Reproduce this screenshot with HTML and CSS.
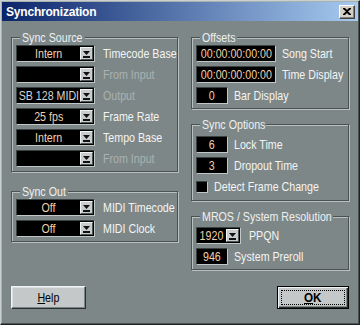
FILE: index.html
```html
<!DOCTYPE html>
<html lang="en">
<head>
    <meta charset="UTF-8">
    <title>Synchronization</title>
    <link rel="stylesheet" href="styles.css">
</head>
<body>
    <div class="window">
        <div class="titlebar">
            <span class="title">Synchronization</span>
            <span class="close">
                <svg width="8" height="7" viewBox="0 0 8 7"><path d="M0 0h2l2 2 2-2h2v1L5 3.5 8 6v1H6L4 5 2 7H0V6l3-2.5L0 1z" fill="#000"/></svg>
            </span>
        </div>
        <div class="content">
            <div class="columns">
                <div class="col left">
                    <fieldset class="group source">
                        <legend><span>Sync Source</span></legend>
                        <div class="row">
                            <div class="combo"><span class="value"><span>Intern</span></span><span class="drop"><svg width="7" height="8" viewBox="0 0 7 8"><path d="M0 1h7L3.5 5z" fill="#111"/><rect x="0" y="6" width="7" height="2" fill="#111"/></svg></span></div>
                            <span class="label">Timecode Base</span>
                        </div>
                        <div class="row">
                            <div class="combo"><span class="value"></span><span class="drop"><svg width="7" height="8" viewBox="0 0 7 8"><path d="M0 1h7L3.5 5z" fill="#111"/><rect x="0" y="6" width="7" height="2" fill="#111"/></svg></span></div>
                            <span class="label off">From Input</span>
                        </div>
                        <div class="row">
                            <div class="combo"><span class="value dim"><span>SB 128 MIDI</span></span><span class="drop"><svg width="7" height="8" viewBox="0 0 7 8"><path d="M0 1h7L3.5 5z" fill="#111"/><rect x="0" y="6" width="7" height="2" fill="#111"/></svg></span></div>
                            <span class="label off">Output</span>
                        </div>
                        <div class="row">
                            <div class="combo"><span class="value"><span>25 fps</span></span><span class="drop"><svg width="7" height="8" viewBox="0 0 7 8"><path d="M0 1h7L3.5 5z" fill="#111"/><rect x="0" y="6" width="7" height="2" fill="#111"/></svg></span></div>
                            <span class="label">Frame Rate</span>
                        </div>
                        <div class="row">
                            <div class="combo"><span class="value"><span>Intern</span></span><span class="drop"><svg width="7" height="8" viewBox="0 0 7 8"><path d="M0 1h7L3.5 5z" fill="#111"/><rect x="0" y="6" width="7" height="2" fill="#111"/></svg></span></div>
                            <span class="label">Tempo Base</span>
                        </div>
                        <div class="row">
                            <div class="combo"><span class="value"></span><span class="drop"><svg width="7" height="8" viewBox="0 0 7 8"><path d="M0 1h7L3.5 5z" fill="#111"/><rect x="0" y="6" width="7" height="2" fill="#111"/></svg></span></div>
                            <span class="label off">From Input</span>
                        </div>
                    </fieldset>
                    <fieldset class="group out">
                        <legend><span>Sync Out</span></legend>
                        <div class="row">
                            <div class="combo"><span class="value"><span>Off</span></span><span class="drop"><svg width="7" height="8" viewBox="0 0 7 8"><path d="M0 1h7L3.5 5z" fill="#111"/><rect x="0" y="6" width="7" height="2" fill="#111"/></svg></span></div>
                            <span class="label">MIDI Timecode</span>
                        </div>
                        <div class="row">
                            <div class="combo"><span class="value"><span>Off</span></span><span class="drop"><svg width="7" height="8" viewBox="0 0 7 8"><path d="M0 1h7L3.5 5z" fill="#111"/><rect x="0" y="6" width="7" height="2" fill="#111"/></svg></span></div>
                            <span class="label">MIDI Clock</span>
                        </div>
                    </fieldset>
                </div>
                <div class="col right">
                    <fieldset class="group offsets">
                        <legend><span>Offsets</span></legend>
                        <div class="row">
                            <span class="field wide"><span>00:00:00:00:00</span></span>
                            <span class="label">Song Start</span>
                        </div>
                        <div class="row">
                            <span class="field wide"><span>00:00:00:00:00</span></span>
                            <span class="label">Time Display</span>
                        </div>
                        <div class="row">
                            <span class="field"><span>0</span></span>
                            <span class="label">Bar Display</span>
                        </div>
                    </fieldset>
                    <fieldset class="group options">
                        <legend><span>Sync Options</span></legend>
                        <div class="row">
                            <span class="field"><span>6</span></span>
                            <span class="label">Lock Time</span>
                        </div>
                        <div class="row">
                            <span class="field"><span>3</span></span>
                            <span class="label">Dropout Time</span>
                        </div>
                        <div class="row">
                            <span class="check"></span>
                            <span class="label">Detect Frame Change</span>
                        </div>
                    </fieldset>
                    <fieldset class="group mros">
                        <legend><span>MROS / System Resolution</span></legend>
                        <div class="row">
                            <div class="combo small"><span class="value"><span>1920</span></span><span class="drop"><svg width="7" height="8" viewBox="0 0 7 8"><path d="M0 1h7L3.5 5z" fill="#111"/><rect x="0" y="6" width="7" height="2" fill="#111"/></svg></span></div>
                            <span class="label">PPQN</span>
                        </div>
                        <div class="row">
                            <span class="field"><span>946</span></span>
                            <span class="label">System Preroll</span>
                        </div>
                    </fieldset>
                </div>
            </div>
            <div class="buttons">
                <button type="button" class="btn help"><span class="caption"><u>H</u>elp</span></button>
                <button type="button" class="btn default"><span class="caption"><span><u>O</u>K</span></span></button>
            </div>
        </div>
    </div>
</body>
</html>
```

FILE: styles.css
```css
body {
    margin: 0;
    font-family: "Liberation Sans", Arial, sans-serif;
    font-size: 13px;
}
.window {
    width: 360px;
    height: 325px;
    box-sizing: border-box;
    background-color: #7d8787;
    border: 1px solid;
    border-color: #c8d0d0 #1c2222 #1c2222 #c8d0d0;
    padding: 1px;
    box-shadow: inset -1px -1px 0 #4a5252, inset 1px 1px 0 #a8b0b0;
}
.titlebar {
    height: 19px;
    display: flex;
    align-items: center;
    justify-content: space-between;
    padding: 0 3px 0 4px;
    background: linear-gradient(to right, #0a246a, #a6caf0);
}
.title {
    color: #fff;
    font-weight: bold;
    font-size: 12px;
    letter-spacing: -0.2px;
}
.close {
    width: 16px;
    height: 14px;
    box-sizing: border-box;
    display: flex;
    align-items: center;
    justify-content: center;
    background-color: #d4d0c8;
    border: 1px solid;
    border-color: #fff #404040 #404040 #fff;
    box-shadow: inset -1px -1px 0 #808080;
}
.content {
    padding: 9px 9px 0;
}
.columns {
    display: flex;
    gap: 13px;
}
.col {
    display: flex;
    flex-direction: column;
}
.col.left {
    width: 167px;
    gap: 12px;
}
.col.right {
    width: 158px;
    gap: 8px;
}
.group {
    margin: 0;
    min-width: 0;
    padding: 0 4px 4px;
    border: 1px solid #4a5252;
    box-shadow: inset 1px 1px 0 #b8c0c0, 1px 1px 0 #b8c0c0;
    display: flex;
    flex-direction: column;
    gap: 4px;
}
/* text is squeezed to the narrow dialog font */
.group legend {
    margin-left: 4px;
    padding: 0 2px;
    line-height: 15px;
    white-space: nowrap;
    color: #eef0f0;
    background-color: #7d8787;
}
.group legend span,
.label,
.value span,
.field span,
.caption {
    display: inline-block;
    transform: scaleX(0.82);
    transform-origin: left center;
}
.value span,
.field span,
.caption {
    transform-origin: center;
}
.source legend { width: 61px; }
.out legend { width: 44px; }
.offsets legend { width: 33px; }
.options legend { width: 62px; }
.mros legend { width: 129px; }
.group.options {
    padding-top: 4px;
    padding-bottom: 5px;
}
.group.mros {
    padding-top: 3px;
}
.row {
    display: flex;
    align-items: center;
    height: 17px;
    gap: 6px;
}
.label {
    color: #f4f4f4;
    white-space: nowrap;
}
.label.off {
    color: #aab2b2;
}
.combo {
    flex: none;
    display: flex;
    width: 79px;
    height: 17px;
    box-sizing: border-box;
    background-color: #000;
    border: 1px solid;
    border-color: #3a4242 #c0c8c8 #c0c8c8 #3a4242;
    padding: 1px 1px 1px 0;
    margin-right: 2px;
}
.combo.small {
    width: 45px;
}
.value {
    flex: 1;
    min-width: 0;
    display: flex;
    justify-content: center;
    color: #f4d0ac;
    line-height: 13px;
    white-space: nowrap;
}
.value.dim {
    color: #d4d4d4;
}
.drop {
    flex: none;
    width: 13px;
    height: 13px;
    box-sizing: border-box;
    display: flex;
    align-items: center;
    justify-content: center;
    background-color: #c8cccc;
    border: 1px solid;
    border-color: #f0f4f4 #4a5252 #4a5252 #f0f4f4;
}
.field {
    flex: none;
    width: 32px;
    height: 17px;
    box-sizing: border-box;
    display: flex;
    justify-content: center;
    background-color: #000;
    border: 1px solid;
    border-color: #3a4242 #c0c8c8 #c0c8c8 #3a4242;
    color: #f4d0ac;
    line-height: 15px;
    white-space: nowrap;
}
.field.wide {
    width: 80px;
}
.check {
    flex: none;
    width: 12px;
    height: 12px;
    box-sizing: border-box;
    background-color: #000;
    border: 1px solid;
    border-color: #3a4242 #c0c8c8 #c0c8c8 #3a4242;
}
.buttons {
    display: flex;
    justify-content: space-between;
    margin-top: 16px;
}
.btn {
    height: 23px;
    padding: 0;
    font-family: "Liberation Sans", Arial, sans-serif;
    font-size: 13px;
    color: #000;
    background-color: #c4c8c8;
    border: 1px solid;
    border-color: #f0f4f4 #283030 #283030 #f0f4f4;
    box-shadow: inset -1px -1px 0 #7c8484, inset 1px 1px 0 #dde0e0;
}
.btn.help {
    width: 75px;
}
.btn.default {
    width: 72px;
    display: flex;
    padding: 3px;
    font-weight: bold;
    border-color: #000;
    box-shadow: inset 1px 1px 0 #f0f4f4, inset -1px -1px 0 #283030, inset -2px -2px 0 #7c8484;
}
.btn.default .caption {
    flex: 1;
    transform: none;
    display: flex;
    justify-content: center;
    border: 1px dotted #000;
    line-height: 13px;
}
.btn.default .caption span {
    transform: scaleX(0.9);
}
```
